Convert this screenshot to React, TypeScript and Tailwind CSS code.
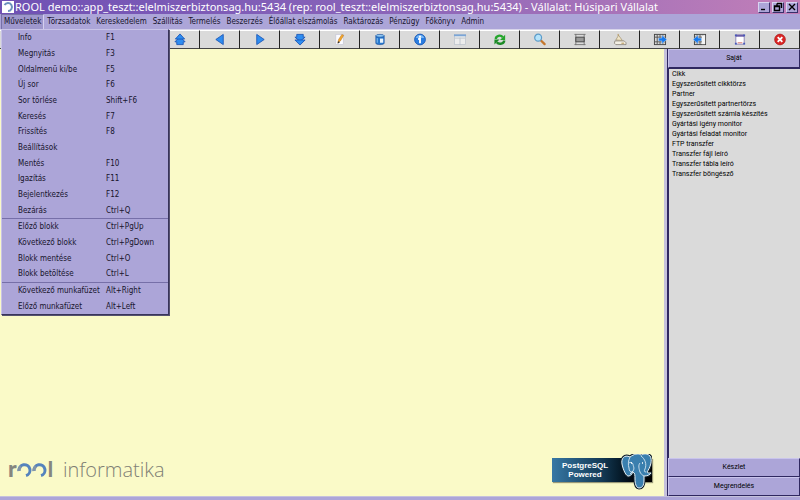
import type { ReactNode } from "react";

const MENUS = [
  "Műveletek",
  "Törzsadatok",
  "Kereskedelem",
  "Szállítás",
  "Termelés",
  "Beszerzés",
  "Élőállat elszámolás",
  "Raktározás",
  "Pénzügy",
  "Főkönyv",
  "Admin",
];

const ACTIONS: { label: string; keys?: string }[][] = [
  [
    { label: "Info", keys: "F1" },
    { label: "Megnyitás", keys: "F3" },
    { label: "Oldalmenü ki/be", keys: "F5" },
    { label: "Új sor", keys: "F6" },
    { label: "Sor törlése", keys: "Shift+F6" },
    { label: "Keresés", keys: "F7" },
    { label: "Frissítés", keys: "F8" },
    { label: "Beállítások" },
    { label: "Mentés", keys: "F10" },
    { label: "Igazítás", keys: "F11" },
    { label: "Bejelentkezés", keys: "F12" },
    { label: "Bezárás", keys: "Ctrl+Q" },
  ],
  [
    { label: "Előző blokk", keys: "Ctrl+PgUp" },
    { label: "Következő blokk", keys: "Ctrl+PgDown" },
    { label: "Blokk mentése", keys: "Ctrl+O" },
    { label: "Blokk betöltése", keys: "Ctrl+L" },
  ],
  [
    { label: "Következő munkafüzet", keys: "Alt+Right" },
    { label: "Előző munkafüzet", keys: "Alt+Left" },
  ],
];

const SHORTCUTS = [
  "Cikk",
  "Egyszerűsített cikktörzs",
  "Partner",
  "Egyszerűsített partnertörzs",
  "Egyszerűsített számla készítés",
  "Gyártási igény monitor",
  "Gyártási feladat monitor",
  "FTP transzfer",
  "Transzfer fájl leíró",
  "Transzfer tábla leíró",
  "Transzfer böngésző",
];

const BLUE = { fill: "#2f8df0", stroke: "#1450b4", strokeWidth: 0.9 };

const grid = (
  <>
    <rect x="1.5" y="1.5" width="12" height="11" fill="#d8d8d8" stroke="#444" />
    <path d="M1.500 4.500h12M1.500 9.500h12M4.500 1.500v11M7.500 1.500v11M10.500 1.500v11" stroke="#555" fill="none" />
  </>
);

const TOOLS: { label: string; icon?: ReactNode }[] = [
  { label: "Info" },
  { label: "Megnyitás" },
  { label: "Új sor" },
  { label: "Sor törlése" },
  {
    label: "Első",
    icon: (
      <>
        <path d="M7.500 4 13 9.500H11V12.500H4V9.500H2Z" {...BLUE} />
        <path d="M7.500 1 12.500 6.500H2.500Z" {...BLUE} />
      </>
    ),
  },
  { label: "Előző", icon: <path d="M11 1.500v11L3 7Z" {...BLUE} /> },
  { label: "Következő", icon: <path d="M4 1.500v11L12 7Z" {...BLUE} /> },
  {
    label: "Utolsó",
    icon: (
      <>
        <path d="M7.500 9 2 4.500H4V1.500H11V4.500H13Z" {...BLUE} />
        <path d="M7.500 13 2 7.500H13Z" {...BLUE} />
      </>
    ),
  },
  {
    label: "Szerkesztés",
    icon: (
      <>
        <rect x="3" y="1.500" width="8" height="11" fill="#fbfbff" stroke="#c4c4d4" strokeWidth=".7" />
        <path d="m5 10.500 1-3.500 3.500-5.500 2 1-3.500 6Z" fill="#f4a62a" stroke="#a86d20" strokeWidth=".5" />
        <path d="m5 11.500 .5-2.500 2 1Z" fill="#333" />
      </>
    ),
  },
  {
    label: "Adatbázis",
    icon: (
      <>
        <path d="M3 3v8c0 2 9 2 9 0V3Z" fill="#2778cf" stroke="#174f9c" strokeWidth=".7" />
        <ellipse cx="7.500" cy="3" rx="4.500" ry="1.500" fill="#8fc9f5" stroke="#174f9c" strokeWidth=".7" />
        <path d="M4.500 5.500v5" stroke="#8fc9f5" />
        <path d="M7.500 6h3.500v4.500H7.500Z" fill="#e8f3fc" />
      </>
    ),
  },
  {
    label: "Információ",
    icon: (
      <>
        <circle cx="7.500" cy="7" r="5.800" fill="#2b7de0" stroke="#1c5bb5" />
        <path d="M3 5.500a4.700 4.700 0 0 1 9 0Z" fill="#7ab8f5" />
        <path d="M7.500 3v2M5.500 6.500H7.500v4.500" stroke="#fff" strokeWidth="2" fill="none" />
      </>
    ),
  },
  {
    label: "Űrlap",
    icon: (
      <>
        <rect x="1.500" y="1.500" width="12" height="11" fill="#ececec" stroke="#bcc3cc" strokeWidth=".8" />
        <path d="M1 1.500h13v2H1Z" fill="#7ba5d6" />
        <path d="M7.500 5v8M2 5.500h11" stroke="#bcc3cc" />
      </>
    ),
  },
  {
    label: "Frissítés",
    icon: (
      <>
        <path d="M3 6.500C3 3 8 1.500 10.500 4.500" stroke="#24a52c" strokeWidth="2.600" fill="none" />
        <path d="M13 2v5.500H7.500Z" fill="#24a52c" />
        <path d="M12 8c0 3.500-5.500 5-8 2" stroke="#1b8a25" strokeWidth="2.600" fill="none" />
        <path d="M1.500 12.500V7H7Z" fill="#1b8a25" />
      </>
    ),
  },
  {
    label: "Keresés",
    icon: (
      <>
        <path d="m8.500 8 4 4" stroke="#c4772d" strokeWidth="2.400" strokeLinecap="round" />
        <circle cx="5.500" cy="5" r="3.700" fill="#b5e3fa" stroke="#5b9bc9" strokeWidth="1.300" />
      </>
    ),
  },
  {
    label: "Sorok",
    icon: (
      <>
        <path d="M1.500 1.500h12M1.500 12.500h12M3 1v12M12 1v12" stroke="#777" fill="none" />
        <path d="M3 4.500h9v5H3Z" fill="#999" stroke="#444" />
      </>
    ),
  },
  {
    label: "Mentés",
    icon: (
      <>
        <path d="M2 8.500h10l2 2v2H3L1.500 11Z" fill="#f3efe4" stroke="#807a70" strokeWidth=".8" />
        <path d="m3 7.500 3-5L10 8Z" fill="#f0e5c8" stroke="#9b8a66" strokeWidth=".7" />
        <path d="M5.500 3V1M9 11h3" stroke="#b28e4b" />
      </>
    ),
  },
  {
    label: "Exportálás",
    icon: (
      <>
        {grid}
        <path d="M6 5.500h3.500V2.500L15 7l-5.500 4.500V8.500H6Z" fill="#1779ee" stroke="#cfe0f5" strokeWidth=".5" />
      </>
    ),
  },
  {
    label: "Importálás",
    icon: (
      <>
        {grid}
        <path d="M9.500 2.500h3.500v9.500H9.500Z" fill="#f4f4f4" />
        <path d="M9 5.500H5.500V2.500L0 7l5.500 4.500V8.500H9Z" fill="#1779ee" stroke="#cfe0f5" strokeWidth=".5" />
      </>
    ),
  },
  {
    label: "Blokk",
    icon: (
      <>
        <rect x="3" y="2" width="9" height="10" fill="#fff" stroke="#8a80b5" />
        <path d="M3 3h9" stroke="#6a5da8" strokeWidth="2" />
        <path d="M2 1.500h2v2H2ZM11 1.500h2v2h-2ZM2 10.500h2v2H2ZM11 10.500h2v2h-2Z" fill="#4458bb" />
        <path d="M5 10.500h5" stroke="#d7726c" />
      </>
    ),
  },
  {
    label: "Kilépés",
    icon: (
      <>
        <circle cx="7.500" cy="7" r="5.800" fill="#d92525" stroke="#a91414" strokeWidth=".7" />
        <path d="m5 4.500 5 5M10 4.500l-5 5" stroke="#fff" strokeWidth="2" />
      </>
    ),
  },
];

const WINDOW_BUTTONS = [
  { label: "Kis méret", d: "M2 7.500h4" },
  { label: "Előző méret", d: "M4 1.500h4.500V6M4 1.500v2M1.500 4h5v4.500h-5ZM1.500 4.500h5" },
  { label: "Bezárás", d: "m2 2 6 6M8 2 2 8" },
];

function TitleBar() {
  return (
    <header className="flex h-3.5 shrink-0 items-center bg-linear-to-r from-[#6f50b4] via-[#8b65b9] to-[#c27fb8] px-0.5">
      <svg className="size-3 shrink-0 bg-white" viewBox="0 0 12 12" aria-hidden="true">
        <path d="M2.500 4A4 4 0 1 1 6 10" fill="none" stroke="#6c91bd" strokeWidth="2" />
      </svg>
      <h1 className="ml-px grow truncate font-['Noto_Sans',sans-serif] text-[11px] leading-[14px] text-white">
        ROOL demo::app_teszt::elelmiszerbiztonsag.hu:5434 (rep: rool_teszt::elelmiszerbiztonsag.hu:5434) - Vállalat:
        Húsipari Vállalat
      </h1>
      <div className="flex gap-0.5">
        {WINDOW_BUTTONS.map((b) => (
          <button
            key={b.label}
            aria-label={b.label}
            className="flex h-[11px] w-3 items-center justify-center border border-t-[#d8d4f0] border-r-[#38306a] border-b-[#38306a] border-l-[#d8d4f0] bg-[#aca5d8]"
          >
            <svg className="size-2.5 shrink-0" viewBox="0 0 10 10">
              <path d={b.d} fill="none" stroke="#000" strokeWidth="1.400" />
            </svg>
          </button>
        ))}
      </div>
    </header>
  );
}

function ActionMenu() {
  return (
    <div
      role="menu"
      className="absolute top-full left-px z-10 flex h-[286px] w-[168px] flex-col border border-t-[#c9c4e8] border-r-[#38345a] border-b-[#38345a] border-l-[#c9c4e8] bg-[#aca5d8] shadow-[1px_1px_0_#55516e]"
    >
      {ACTIONS.map((group, i) => (
        <div key={group[0].label} className="contents">
          {i > 0 && <hr className="border-t border-[#766fa8]" />}
          {group.map((a) => (
            <button key={a.label} role="menuitem" className="flex flex-1 items-center pl-4 text-left">
              <span className="w-[88px] whitespace-nowrap">{a.label}</span>
              <span>{a.keys}</span>
            </button>
          ))}
        </div>
      ))}
    </div>
  );
}

function MenuBar() {
  return (
    <nav className="relative flex h-[15px] shrink-0 bg-[#aca5d8] pl-px text-[8px] leading-[15px] text-[#17142c]">
      {MENUS.map((m, i) => (
        <button
          key={m}
          className={
            i === 0
              ? "border border-t-[#7770a8] border-r-[#d4d0ee] border-b-0 border-l-[#7770a8] bg-[#9e97cc] px-0.5 leading-[14px]"
              : "px-[3px]"
          }
        >
          {m}
        </button>
      ))}
      <ActionMenu />
    </nav>
  );
}

function Toolbar() {
  return (
    <div role="toolbar" className="grid h-5 shrink-0 grid-cols-20 border-t border-[#d8d5ea]">
      {TOOLS.map((t) => (
        <button
          key={t.label}
          aria-label={t.label}
          className="flex items-center justify-center border-t border-r border-b border-t-white border-r-[#222] border-b-[#444] bg-[#dadada]"
        >
          {t.icon && (
            <svg className="h-[13px] w-3.5" viewBox="0 0 15 14">
              {t.icon}
            </svg>
          )}
        </button>
      ))}
    </div>
  );
}

function RoolLogo() {
  return (
    <div className="flex items-baseline text-[#85867f]">
      <span className="font-[Lato,sans-serif] text-[23px] leading-6 font-black">r</span>
      <svg className="h-3.5 w-[31px]" viewBox="0 0 31 14" aria-label="oo">
        <path d="M2 8A5.500 5.500 0 1 1 9 12.500M17 8A5.500 5.500 0 1 1 24 12.500" fill="none" stroke="#5583bd" strokeWidth="3" />
        <path d="M2 8A5.500 5.500 0 0 1 4 3.300M17 8A5.500 5.500 0 0 1 19 3.300" fill="none" stroke="#8295a8" strokeWidth="3" />
      </svg>
      <span className="font-[Lato,sans-serif] text-[21px] leading-6 font-black">l</span>
      <span className="ml-2.5 font-['Open_Sans',sans-serif] text-[20px] leading-6 font-light text-[#7f8075]">informatika</span>
    </div>
  );
}

function PostgresBadge() {
  return (
    <div className="relative flex h-6 w-[100px] items-center bg-linear-to-r from-[#3778a5] via-[#143a55] to-black pl-2.5 shadow-[1px_1px_1px_#999977]">
      <p className="w-[46px] text-center font-['Liberation_Sans',sans-serif] text-[8px] leading-[9px] font-bold whitespace-nowrap text-white">
        PostgreSQL
        <br />
        Powered
      </p>
      <svg className="absolute -top-1 right-0 h-9 w-8" viewBox="0 0 32 36" aria-hidden="true">
        <path
          d="M10 3C4 0 1 5 2 10s4 13 7 12 3-3 4-4c2 1 2 3 2 7s1 9 4 9 5-2 5-8v-4c3 0 6-1 7-3-2 0-4 0-4-1 3-4 6-12 3-16-4-4-8-1-9-1-3-2-7-1-11 2Z"
          fill="#3a7fae"
          stroke="#10202c"
          strokeWidth="3"
          strokeLinejoin="round"
        />
        <path
          d="M10 3C4 0 1 5 2 10s4 13 7 12 3-3 4-4c2 1 2 3 2 7s1 9 4 9 5-2 5-8v-4c3 0 6-1 7-3-2 0-4 0-4-1 3-4 6-12 3-16-4-4-8-1-9-1-3-2-7-1-11 2Z"
          fill="#3a7fae"
          stroke="#e8f2f7"
          strokeWidth="1"
        />
        <path
          d="M10 3c-2 4-2 8-1 11 0 4 3 5 4 3 2-3 0-5 0-7-1-2-3-2-4-1M21 2c4 3 6 8 4 13-1 2-1 3 1 3M20 9c-2 2-1 6 0 9 1 2 2 3 4 4M13 17l-3 3"
          fill="none"
          stroke="#d5e6f0"
          strokeWidth=".9"
        />
        <path d="M11 9h1M22 9h1" stroke="#fff" strokeWidth="1.500" />
      </svg>
    </div>
  );
}

function SideButton({ children }: { children: ReactNode }) {
  return (
    <button className="h-[19px] shrink-0 border border-t-[#c9c4ec] border-r-[#2f2860] border-b-[#2f2860] border-l-[#c9c4ec] bg-[#aca5d8] text-center">
      {children}
    </button>
  );
}

function SidePanel() {
  return (
    <aside className="flex w-[136px] shrink-0 flex-col border-l-[3px] border-[#c5c1dc] bg-[#aca5d8] font-[Roboto,sans-serif] text-[7px] text-black">
      <div className="flex grow flex-col border-l border-[#2f2860]">
        <SideButton>Saját</SideButton>
        <ul className="grow border-t border-l border-[#2f2860] bg-[#dadada] pl-[3px]">
          {SHORTCUTS.map((s) => (
            <li key={s} className="flex h-2.5">
              <button className="leading-[10px] whitespace-nowrap">{s}</button>
            </li>
          ))}
        </ul>
        <SideButton>Készlet</SideButton>
        <SideButton>Megrendelés</SideButton>
      </div>
    </aside>
  );
}

export default function App() {
  return (
    <div className="flex h-screen min-h-96 flex-col overflow-hidden bg-[#aca5d8] font-['DejaVu_Sans_Condensed','Noto_Sans',sans-serif]">
      <TitleBar />
      <MenuBar />
      <Toolbar />
      <div className="flex grow">
        <main className="flex grow items-end justify-between bg-[#fafac8] pr-3 pb-3.5 pl-2">
          <RoolLogo />
          <PostgresBadge />
        </main>
        <SidePanel />
      </div>
      <footer className="h-1 shrink-0 border-t border-[#c5c1dc] bg-[#aca5d8]" />
    </div>
  );
}
